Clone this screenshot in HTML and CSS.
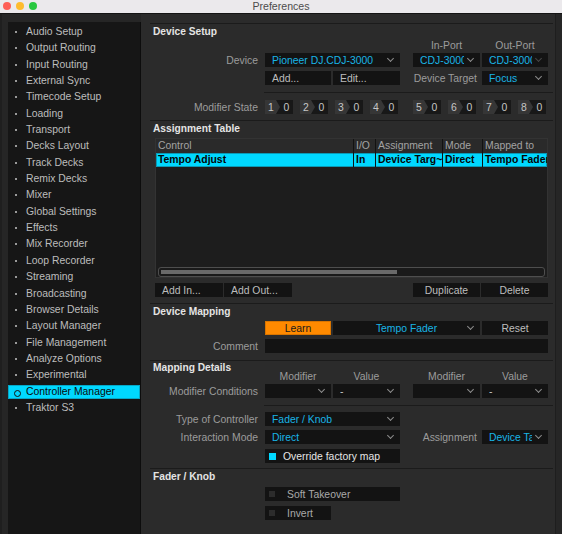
FILE: index.html
```html
<!DOCTYPE html>
<html lang="en">
<head>
  <meta charset="UTF-8">
  <title>Preferences</title>
  <link rel="stylesheet" href="styles.css">
</head>
<body>
  <div class="titlebar">
    <div class="lights">
      <span class="light red"></span>
      <span class="light yellow"></span>
      <span class="light green"></span>
    </div>
    <div class="title">Preferences</div>
  </div>

  <div class="window-body">
    <!-- 左侧菜单 -->
    <ul class="sidebar">
      <li class="nav-item">Audio Setup</li>
      <li class="nav-item">Output Routing</li>
      <li class="nav-item">Input Routing</li>
      <li class="nav-item">External Sync</li>
      <li class="nav-item">Timecode Setup</li>
      <li class="nav-item">Loading</li>
      <li class="nav-item">Transport</li>
      <li class="nav-item">Decks Layout</li>
      <li class="nav-item">Track Decks</li>
      <li class="nav-item">Remix Decks</li>
      <li class="nav-item">Mixer</li>
      <li class="nav-item">Global Settings</li>
      <li class="nav-item">Effects</li>
      <li class="nav-item">Mix Recorder</li>
      <li class="nav-item">Loop Recorder</li>
      <li class="nav-item">Streaming</li>
      <li class="nav-item">Broadcasting</li>
      <li class="nav-item">Browser Details</li>
      <li class="nav-item">Layout Manager</li>
      <li class="nav-item">File Management</li>
      <li class="nav-item">Analyze Options</li>
      <li class="nav-item">Experimental</li>
      <li class="nav-item active">Controller Manager</li>
      <li class="nav-item">Traktor S3</li>
    </ul>

    <div class="main">
      <!-- Device Setup -->
      <div class="section section-device">
        <div class="heading">Device Setup</div>
        <div class="row row-head">
          <span class="col-head c3">In-Port</span>
          <span class="col-head c4">Out-Port</span>
        </div>
        <div class="row">
          <span class="label">Device</span>
          <div class="select c12"><span class="val">Pioneer DJ.CDJ-3000</span></div>
          <div class="select c3"><span class="val">CDJ-3000</span></div>
          <div class="select c4 dim"><span class="val">CDJ-3000</span></div>
        </div>
        <div class="row gap4">
          <span class="label"></span>
          <div class="btn c1">Add...</div>
          <div class="btn c2">Edit...</div>
          <span class="label inline-label">Device Target</span>
          <div class="select c4"><span class="val">Focus</span></div>
        </div>
        <div class="subline"></div>
        <div class="row">
          <span class="label">Modifier State</span>
          <div class="mods c12">
            <div class="mod"><span class="mod-num">1</span><span class="mod-val">0</span></div>
            <div class="mod"><span class="mod-num">2</span><span class="mod-val">0</span></div>
            <div class="mod"><span class="mod-num">3</span><span class="mod-val">0</span></div>
            <div class="mod"><span class="mod-num">4</span><span class="mod-val">0</span></div>
          </div>
          <div class="mods c34">
            <div class="mod"><span class="mod-num">5</span><span class="mod-val">0</span></div>
            <div class="mod"><span class="mod-num">6</span><span class="mod-val">0</span></div>
            <div class="mod"><span class="mod-num">7</span><span class="mod-val">0</span></div>
            <div class="mod"><span class="mod-num">8</span><span class="mod-val">0</span></div>
          </div>
        </div>
      </div>

      <!-- Assignment Table -->
      <div class="section section-table">
        <div class="heading">Assignment Table</div>
        <div class="table">
          <div class="tr th">
            <span>Control</span><span>I/O</span><span>Assignment</span><span>Mode</span><span>Mapped to</span>
          </div>
          <div class="tr selected">
            <span>Tempo Adjust</span><span>In</span><span>Device Targ~</span><span>Direct</span><span>Tempo Fader</span>
          </div>
          <div class="scrollbar"><div class="thumb"></div></div>
        </div>
        <div class="table-buttons">
          <div class="btn">Add In...</div>
          <div class="btn">Add Out...</div>
          <div class="spacer"></div>
          <div class="btn center">Duplicate</div>
          <div class="btn center">Delete</div>
        </div>
      </div>

      <!-- Device Mapping -->
      <div class="section section-mapping">
        <div class="heading">Device Mapping</div>
        <div class="row gap3">
          <span class="label"></span>
          <div class="btn learn c1">Learn</div>
          <div class="select centered c23"><span class="val">Tempo Fader</span></div>
          <div class="btn center c4">Reset</div>
        </div>
        <div class="row gap4">
          <span class="label">Comment</span>
          <div class="field c14"></div>
        </div>
      </div>

      <!-- Mapping Details -->
      <div class="section section-details">
        <div class="heading short">Mapping Details</div>
        <div class="row row-head tight">
          <span class="col-head c1">Modifier</span>
          <span class="col-head c2">Value</span>
          <span class="col-head c3">Modifier</span>
          <span class="col-head c4">Value</span>
        </div>
        <div class="row">
          <span class="label">Modifier Conditions</span>
          <div class="select c1"></div>
          <div class="select grey c2"><span class="val">-</span></div>
          <div class="select c3"></div>
          <div class="select grey c4"><span class="val">-</span></div>
        </div>
        <div class="subline"></div>
        <div class="row">
          <span class="label">Type of Controller</span>
          <div class="select c12"><span class="val">Fader / Knob</span></div>
        </div>
        <div class="row gap4">
          <span class="label">Interaction Mode</span>
          <div class="select c12"><span class="val">Direct</span></div>
          <span class="label inline-label">Assignment</span>
          <div class="select c4"><span class="val">Device Target</span></div>
        </div>
        <div class="row gap5">
          <span class="label"></span>
          <div class="check on c12"><span class="box"></span>Override factory map</div>
        </div>
      </div>

      <!-- Fader / Knob -->
      <div class="section section-fader">
        <div class="heading">Fader / Knob</div>
        <div class="row gap4">
          <span class="label"></span>
          <div class="check c12"><span class="box"></span>Soft Takeover</div>
        </div>
        <div class="row gap5">
          <span class="label"></span>
          <div class="check c1"><span class="box"></span>Invert</div>
        </div>
      </div>
    </div>
  </div>
</body>
</html>
```

FILE: styles.css
```css
/* 颜色 */
:root {
  --bg: #2b2b2b;
  --sidebar-bg: #161616;
  --control-bg: #131313;
  --line: #1b1b1b;
  --text: #bdbdbd;
  --label: #9c9c9c;
  --heading: #e4e4e4;
  --cyan: #00d8ff;
  --cyan-text: #19b5e6;
  --orange: #ff8a00;
}

* {
  margin: 0;
  padding: 0;
  box-sizing: border-box;
}

body {
  width: 562px;
  height: 534px;
  overflow: hidden;
  background: var(--bg);
  color: var(--text);
  font-family: "Liberation Sans", Arial, sans-serif;
  font-size: 10.4px;
}

/* 标题栏 */
.titlebar {
  position: relative;
  height: 14px;
  background: #ebe9ec;
  border-bottom: 1px solid #141414;
}

.lights {
  position: absolute;
  left: 3px;
  top: 2px;
  display: flex;
  gap: 5px;
}

.light {
  width: 8px;
  height: 8px;
  border-radius: 50%;
}

.red { background: #fe5f57; }
.yellow { background: #febc2e; }
.green { background: #28c840; }

.title {
  text-align: center;
  font-size: 10.6px;
  line-height: 12px;
  color: #4b4b4b;
}

/* 主体 */
.window-body {
  display: flex;
  height: 520px;
  border-left: 2px solid #1f1f1f;
  background: #262626;
}

.sidebar {
  list-style: none;
  width: 133px;
  margin: 8px 0 0 6px;
  padding-top: 3px;
  background: var(--sidebar-bg);
  border-right: 1px solid #0d0d0d;
}

.nav-item {
  position: relative;
  height: 14px;
  line-height: 14px;
  margin-bottom: 2.35px;
  padding-left: 18px;
  color: var(--text);
  white-space: nowrap;
}

.nav-item::before {
  content: "";
  position: absolute;
  left: 7px;
  top: 6px;
  width: 2px;
  height: 2px;
  background: #9a9a9a;
}

.nav-item.active {
  background: var(--cyan);
  color: #0a0a0a;
  box-shadow: inset 0 0 0 1px #05a8c8;
}

.nav-item.active::before {
  left: 6px;
  top: 5px;
  width: 5px;
  height: 5px;
  background: transparent;
  border: 1px solid #111;
  border-radius: 50%;
}

.main {
  width: 415px;
  padding: 9px 2px 0 9px;
  background: var(--bg);
  border-right: 1px solid #1e1e1e;
}

/* 分区 */
.section {
  border-top: 1px solid var(--line);
}

.heading {
  height: 14px;
  line-height: 15px;
  padding-left: 3px;
  font-size: 10.2px;
  font-weight: bold;
  color: var(--heading);
}

.heading.short {
  height: 12px;
  line-height: 13px;
}

.section-device { padding-bottom: 6px; }
.section-table { padding-bottom: 6px; }
.section-mapping { padding-bottom: 7px; }
.section-details { padding-bottom: 5px; }

.row {
  display: grid;
  grid-template-columns: 113px 66px 67px 9px 67px 66px;
  column-gap: 2px;
  height: 14px;
}

.row.gap3 { margin-top: 3px; }
.row.gap4 { margin-top: 4px; }
.row.gap5 { margin-top: 5px; }

.row-head {
  margin-bottom: 1px;
}

.row-head.tight {
  margin-top: -4px;
}

.c1 { grid-column: 2 / 3; }
.c2 { grid-column: 3 / 4; }
.c3 { grid-column: 5 / 6; }
.c4 { grid-column: 6 / 7; }
.c12 { grid-column: 2 / 4; }
.c23 { grid-column: 3 / 6; }
.c34 { grid-column: 5 / 7; }
.c14 { grid-column: 2 / 7; }

.label {
  grid-column: 1 / 2;
  text-align: right;
  padding-right: 5px;
  line-height: 15px;
  color: var(--label);
  white-space: nowrap;
}

.label.inline-label {
  grid-column: 5 / 6;
  padding-right: 3px;
}

.col-head {
  text-align: center;
  line-height: 15px;
  color: var(--label);
}

.subline {
  height: 1px;
  margin: 7px 0 7px 114px;
  background: var(--line);
}

.section-details .subline {
  margin: 7px 0 6px 114px;
}

/* 控件 */
.select,
.btn,
.field,
.check {
  height: 14px;
  line-height: 15px;
  background: var(--control-bg);
  white-space: nowrap;
  overflow: hidden;
}

.select {
  position: relative;
  padding: 0 16px 0 7px;
  color: var(--cyan-text);
}

.select .val {
  display: block;
  overflow: hidden;
}

.select::after {
  content: "";
  position: absolute;
  right: 7px;
  top: 3px;
  width: 4px;
  height: 4px;
  border-right: 1px solid #8c8c8c;
  border-bottom: 1px solid #8c8c8c;
  transform: rotate(45deg);
}

.select.dim::after {
  border-color: #474747;
}

.select.grey {
  color: #c8c8c8;
}

.select.centered {
  text-align: center;
  padding-left: 16px;
}

.btn {
  padding-left: 7px;
  color: var(--text);
}

.btn.center {
  padding-left: 0;
  text-align: center;
}

.btn.learn {
  padding-left: 0;
  text-align: center;
  background: var(--orange);
  color: #1a1a1a;
  box-shadow: inset 0 0 0 1px #d97500;
}

.check {
  display: flex;
  align-items: center;
  color: #a9a9a9;
}

.check .box {
  width: 6px;
  height: 6px;
  margin: 0 12px 0 4px;
  background: #2c2c2c;
}

.check.on {
  color: #e6e6e6;
}

.check.on .box {
  width: 7px;
  height: 7px;
  margin-right: 7px;
  background: var(--cyan);
}

/* Modifier State 小格 */
.mods {
  display: flex;
  gap: 7px;
}

.mod {
  display: flex;
  width: 28px;
  height: 14px;
  line-height: 15px;
  background: #181818;
  color: #c6c6c6;
}

.mod-num {
  width: 15px;
  padding-left: 3px;
  background: #363636;
  clip-path: polygon(0 0, 11px 0, 15px 50%, 11px 100%, 0 100%);
}

.mod-val {
  flex: 1;
  text-align: center;
}

/* 表格 */
.table {
  position: relative;
  margin: 3px 0 0 5px;
  width: 393px;
  height: 140px;
  background: #1d1d1d;
  border: 1px solid #333;
}

.tr {
  display: grid;
  grid-template-columns: 198px 22px 67px 40px 1fr;
  height: 14px;
  line-height: 14px;
}

.tr span {
  padding-left: 2px;
  overflow: hidden;
  white-space: nowrap;
  border-right: 1px solid #121212;
}

.tr span:last-child {
  border-right: none;
}

.th {
  background: #2a2a2a;
  color: #a3a3a3;
}

.selected {
  background: var(--cyan);
  color: #050505;
  font-weight: bold;
  box-shadow: inset 0 0 0 1px #0a9ab6;
}

.scrollbar {
  position: absolute;
  left: 2px;
  right: 2px;
  bottom: 0;
  height: 10px;
  padding: 2px;
  border: 1px solid #4e4e4e;
  border-radius: 3px;
  background: #1a1a1a;
}

.thumb {
  width: 236px;
  height: 100%;
  background: #6a6a6a;
}

.table-buttons {
  display: flex;
  gap: 1px;
  margin: 5px 0 0 5px;
  width: 393px;
}

.table-buttons .btn {
  width: 68px;
}

.table-buttons .btn.center {
  width: 67px;
}

.table-buttons .spacer {
  flex: 1;
}
```
